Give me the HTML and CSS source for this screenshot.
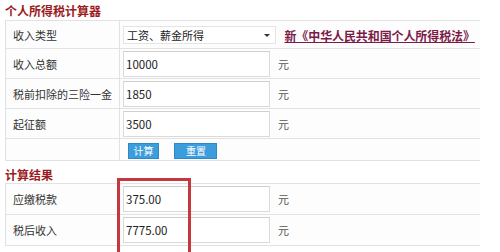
FILE: index.html
```html
<!DOCTYPE html>
<html lang="zh-CN">

<head>
  <meta charset="UTF-8" />
  <title>个人所得税计算器</title>
  <link rel="stylesheet" href="styles.css">
</head>

<body>
  <div class="calc-wrap">
    <h2 class="box-title">个人所得税计算器</h2>
    <table class="calc-table">
      <tr class="row-sel">
        <td class="label">收入类型</td>
        <td class="value">
          <span class="sel-box">工资、薪金所得</span>
          <a class="law-link" href="#">新《中华人民共和国个人所得税法》</a>
        </td>
      </tr>
      <tr>
        <td class="label">收入总额</td>
        <td class="value"><input type="text" class="num-input" value="10000" /><span class="unit">元</span></td>
      </tr>
      <tr>
        <td class="label">税前扣除的三险一金</td>
        <td class="value"><input type="text" class="num-input" value="1850" /><span class="unit">元</span></td>
      </tr>
      <tr>
        <td class="label">起征额</td>
        <td class="value"><input type="text" class="num-input" value="3500" /><span class="unit">元</span></td>
      </tr>
      <tr class="row-btn">
        <td class="label"></td>
        <td class="value">
          <input type="button" class="btn btn-calc" value="计算" />
          <input type="button" class="btn btn-reset" value="重置" />
        </td>
      </tr>
    </table>

    <h2 class="box-title result-title">计算结果</h2>
    <table class="calc-table result-table">
      <tr>
        <td class="label">应缴税款</td>
        <td class="value"><input type="text" class="num-input" value="375.00" /><span class="unit">元</span></td>
      </tr>
      <tr>
        <td class="label">税后收入</td>
        <td class="value"><input type="text" class="num-input" value="7775.00" /><span class="unit">元</span></td>
      </tr>
    </table>

    <!-- 红框标注 -->
    <div class="mark-box"></div>
  </div>
</body>

</html>
```

FILE: styles.css
```css
body {
  margin: 0;
  padding: 0;
  background: #fff;
  font-family: "Noto Sans CJK SC", "DejaVu Sans", sans-serif;
  color: #333;
}

.calc-wrap {
  position: relative;
  padding: 2px 0 0 5px;
  width: 480px;
  height: 250px;
  overflow: hidden;
}

.box-title {
  margin: 0;
  font-size: 12px;
  line-height: 18px;
  font-weight: bold;
  color: #9a1c22;
}

.result-title {
  margin-top: 5px;
  line-height: 17px;
}

.calc-table {
  border-collapse: collapse;
  width: 475px;
  font-size: 11px;
  background: #fdfdfd;
}

.calc-table td {
  border-top: 1px solid #e2e2e2;
  border-bottom: 1px solid #e2e2e2;
  padding: 0;
  height: 29px;
}

.calc-table .label {
  width: 106px;
  padding-left: 7px;
  border-left: 1px solid #e2e2e2;
  border-right: 1px solid #e2e2e2;
  color: #333;
  white-space: nowrap;
}

.calc-table .value {
  padding-left: 3px;
  white-space: nowrap;
}

.row-sel td {
  height: 27px;
}

.row-btn td {
  height: 21px;
}

.result-table td {
  height: 30px;
}

.sel-box {
  position: relative;
  display: inline-block;
  vertical-align: middle;
  box-sizing: border-box;
  width: 153px;
  height: 18px;
  line-height: 16px;
  padding-left: 3px;
  border: 1px solid #e4e4e4;
  background: #fff;
  font-size: 11px;
  color: #222;
}

.sel-box::after {
  content: "";
  position: absolute;
  right: 5px;
  top: 7px;
  border-left: 3px solid transparent;
  border-right: 3px solid transparent;
  border-top: 3px solid #333;
}

.law-link {
  display: inline-block;
  vertical-align: middle;
  margin-left: 6px;
  font-size: 12px;
  font-weight: bold;
  color: #7c1a48;
  text-decoration: underline;
  letter-spacing: -0.1px;
}

.num-input {
  box-sizing: border-box;
  width: 147px;
  height: 26px;
  padding: 0 2px;
  margin: 0;
  vertical-align: middle;
  border: 1px solid #dadada;
  border-top-color: #cfcfcf;
  background: #fff;
  font-family: "Noto Sans CJK SC", "DejaVu Sans", sans-serif;
  font-size: 11.5px;
  color: #222;
}

.unit {
  display: inline-block;
  vertical-align: middle;
  margin-left: 8px;
  font-size: 11px;
  color: #555;
}

.btn {
  box-sizing: border-box;
  height: 16px;
  padding: 0;
  margin: 0;
  vertical-align: middle;
  border: 1px solid #2f88c6;
  background: #3b9ddc;
  color: #fff;
  font-family: "Noto Sans CJK SC", sans-serif;
  font-size: 10px;
  line-height: 14px;
}

.btn-calc {
  width: 31px;
  margin-left: 5px;
}

.btn-reset {
  width: 43px;
  margin-left: 13px;
}

.mark-box {
  position: absolute;
  left: 117px;
  top: 178px;
  width: 68px;
  height: 90px;
  border: 3px solid #c4393f;
}
```
